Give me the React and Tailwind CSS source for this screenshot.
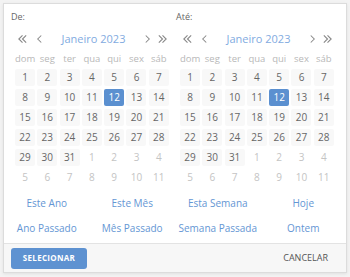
import React from 'react';

const WEEK = ['dom', 'seg', 'ter', 'qua', 'qui', 'sex', 'sáb'];

// Janeiro 2023 starts on a Sunday
const DAYS = [
  ...Array.from({ length: 31 }, (_, i) => ({ n: i + 1, cur: true })),
  ...Array.from({ length: 11 }, (_, i) => ({ n: i + 1, cur: false })),
];

function Chev({ dir = 'left', double = false }) {
  const d = dir === 'left' ? 'M6 1 L2 5 L6 9' : 'M2 1 L6 5 L2 9';
  const d2 = dir === 'left' ? 'M10 1 L6 5 L10 9' : 'M6 1 L10 5 L6 9';
  return (
    <svg width={double ? 11 : 7} height="10" viewBox={double ? '0 0 12 10' : '0 0 8 10'} fill="none" stroke="#888" strokeWidth="1.2">
      <path d={d} />
      {double && <path d={d2} />}
    </svg>
  );
}

function Calendar({ label, className }) {
  return (
    <div className={className}>
      <div className="text-[9px] leading-[12px] text-[#666]">{label}</div>
      <div className="mt-[8px] ml-[4px] w-[156px] h-[16px] flex items-center">
        <div className="flex items-center gap-[8px] pl-[2px]">
          <Chev dir="left" double />
          <Chev dir="left" />
        </div>
        <div className="flex-1 text-center text-[11px] text-[#82abdf]">Janeiro 2023</div>
        <div className="flex items-center gap-[6px] pr-[3px]">
          <Chev dir="right" />
          <Chev dir="right" double />
        </div>
      </div>
      <div className="mt-[5px] ml-[4px] grid grid-cols-[repeat(7,20px)] gap-x-[2.3px] h-[14px] items-center">
        {WEEK.map((w) => (
          <div key={w} className="text-center text-[9.5px] text-[#b8b8b8]">{w}</div>
        ))}
      </div>
      <div className="mt-[3px] ml-[4px] grid grid-cols-[repeat(7,20px)] gap-x-[2.3px] gap-y-[3px]">
        {DAYS.map((d, i) => {
          const sel = d.cur && d.n === 12;
          return (
            <div
              key={i}
              className={`h-[17px] flex items-center justify-center rounded-[2px] text-[10px] ${
                sel ? 'bg-[#5b90d0] text-white' : d.cur ? 'bg-[#f8f8f8] text-[#666]' : 'text-[#c4c4c4]'
              }`}
            >
              {d.n}
            </div>
          );
        })}
      </div>
    </div>
  );
}

const LINKS = ['Este Ano', 'Este Mês', 'Esta Semana', 'Hoje', 'Ano Passado', 'Mês Passado', 'Semana Passada', 'Ontem'];

export default function App() {
  return (
    <div className="w-[350px] h-[277px] bg-[#f3f3f3] p-[3px]" style={{ fontFamily: '"Open Sans", sans-serif' }}>
      <div className="w-[344px] h-[270px] bg-white border border-[#dcdcdc] flex flex-col shadow-[0_1px_3px_rgba(0,0,0,0.08)]">
        <div className="flex pt-[7px]">
          <Calendar label="De:" className="w-[170px] pl-[7px]" />
          <Calendar label="Até:" className="w-[170px] pl-[2px]" />
        </div>
        <div className="mt-[10px] grid grid-cols-4 gap-y-[11px] text-[10px] leading-[14px] text-[#6496d4]">
          {LINKS.map((l) => (
            <div key={l} className="text-center">{l}</div>
          ))}
        </div>
        <div className="mt-auto h-[29px] border-t border-[#e3e3e3] bg-[#f7f7f7] flex items-center justify-between pl-[7px] pr-[18px]">
          <button className="w-[76px] h-[21px] rounded-[3px] bg-[#5e92d1] text-white text-[8px] font-bold tracking-[0.3px]">
            SELECIONAR
          </button>
          <span className="text-[9px] text-[#555]">CANCELAR</span>
        </div>
      </div>
    </div>
  );
}
